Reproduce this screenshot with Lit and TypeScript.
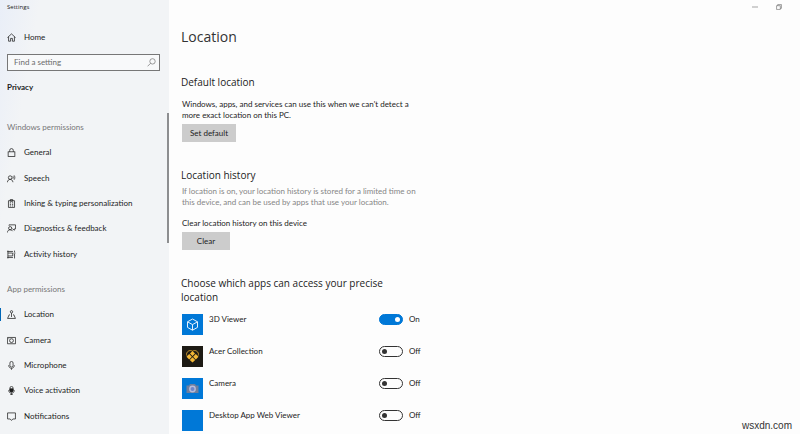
import { LitElement, html, css, svg, type TemplateResult, type SVGTemplateResult } from "lit";
import { customElement, property, state } from "lit/decorators.js";
import { classMap } from "lit/directives/class-map.js";

const glyphs: Record<string, SVGTemplateResult> = {
  home: svg`<path d="M.8 8.200 8 1.600l7.200 6.600M2.800 6.800V14.600h3.600V9.600h3.200v5h3.600V6.800" />`,
  general: svg`<rect x="2" y="6.8" width="12" height="8.2" /><path d="M4.800 6.800V4.200a3.200 3.200 0 0 1 6.400 0v2.600" />`,
  speech: svg`<circle cx="5.6" cy="6.4" r="3.2" /><path d="M.6 14.800C1 11.400 3 9.600 5.600 9.600s4.600 1.800 5 5M10.400 3.800c1 1.500 1 3.200 0 4.800M12.600 2.400c1.700 2.400 1.700 5.400 0 7.800" />`,
  inking: svg`<path d="M2.600 3h10.800v12H2.600zM5.800 1h4.400v3H5.800z" /><path d="M5 6.800h2.200M8.800 6.800H11M5 9.600h2.200M8.800 9.600H11M5 12.400h2.200M8.800 12.400H11" />`,
  diagnostics: svg`<circle cx="5.6" cy="7.4" r="2.8" /><path d="M.6 15.200c.4-3.200 2-5 5-5 2.200 0 3.600 1 4.400 2.600M3.600 3V1.500h11.600v7.200H13v2.500l-2.500-2.500h-1" />`,
  activity: svg`<path d="M.6 2.600h10M.6 13.400h10M1.600 1v14M1.600 5.400h8.600v5.200H1.600M13.400 1v3M13.400 7v8M11.800 5.500h3.200" />`,
  location: svg`<path d="M5.200 8.600H3.800L1 15h14l-2.800-6.400h-1.400M8 12.400V5.400" /><circle cx="8" cy="3.2" r="2.1" />`,
  camera: svg`<path d="M.8 2.600h14.400v11.200H.8z" /><circle cx="8" cy="8.2" r="3.4" /><path d="M2.600 4.800h1.400" />`,
  microphone: svg`<rect x="5.200" y=".8" width="5.600" height="10" rx="2.800" /><path d="M3 7.400c0 7.400 10 7.400 10 0M8 13v2.600" />`,
  voice: svg`<rect x="5.2" y=".8" width="5.6" height="10" rx="2.8" /><path class="solid" d="M5.2 5h5.6v3a2.800 2.800 0 0 1-5.600 0z" /><path d="M3 7.400c0 7.400 10 7.400 10 0M8 13v2.600M5.600 15.400h4.800" />`,
  notifications: svg`<path d="M1 1.600h14v10.800h-4.600L8 15l-2.400-2.600H1z" />`,
  search: svg`<circle cx="9.8" cy="6" r="4.8" /><path d="M6.400 9.400 1 14.800" />`,
  minimise: svg`<path d="M0 8h16" />`,
  restore: svg`<path d="M1.500 4.500h10v10h-10zM4.500 4.500v-3h10v10h-3" />`,
};

const tiles: Record<string, SVGTemplateResult | string> = {
  viewer: svg`<path class="line" d="M10.5 5l5 2.8v5.600l-5 2.800-5-2.800V7.800zM5.500 7.800l5 2.800 5-2.800M10.500 10.600v5.600" />`,
  acer: svg`<path class="rim" d="M4.800 9.600C3.400 6 7.800 3.200 10.500 5.200 13.200 3.200 17.600 6 16.200 9.600" />
    <path class="gold" d="M10.500 5l2.500 2.500-2.500 2.500L8 7.500zM7.200 8l2.700 2.700-2.700 2.700-2.700-2.700zM13.800 8l2.700 2.700-2.700 2.700-2.700-2.700zM10.500 11.200l2.700 2.700-2.700 2.700-2.700-2.700z" />`,
  camera: svg`<path class="body" d="M4.500 7.500H7l1-1.500h5l1 1.500h2.500v7.500h-12z" /><circle class="ring" cx="10.5" cy="11" r="3.4" /><circle class="lens" cx="10.5" cy="11" r="2" />`,
  blank: "",
};

@customElement("line-icon")
export class LineIcon extends LitElement {
  @property() name = "";

  static styles = css`
    :host { display: block; width: 9px; height: 9px; flex: none; }
    .glyph { display: block; width: 100%; height: 100%; fill: none; stroke: currentColor; stroke-width: 1.3; }
    .solid { fill: currentColor; }
  `;

  render() {
    return html`<svg class="glyph" viewBox="0 0 16 16" aria-hidden="true">${glyphs[this.name]}</svg>`;
  }
}

interface NavItem { icon: string; label: string; }
interface AppEntry { tile: string; name: string; allowed: boolean; }

const windowsPermissions: NavItem[] = [
  { icon: "general", label: "General" },
  { icon: "speech", label: "Speech" },
  { icon: "inking", label: "Inking & typing personalization" },
  { icon: "diagnostics", label: "Diagnostics & feedback" },
  { icon: "activity", label: "Activity history" },
];

const appPermissions: NavItem[] = [
  { icon: "location", label: "Location" },
  { icon: "camera", label: "Camera" },
  { icon: "microphone", label: "Microphone" },
  { icon: "voice", label: "Voice activation" },
  { icon: "notifications", label: "Notifications" },
];

@customElement("app-root")
export class AppRoot extends LitElement {
  @state() private current = "Location";
  @state() private apps: AppEntry[] = [
    { tile: "viewer", name: "3D Viewer", allowed: true },
    { tile: "acer", name: "Acer Collection", allowed: false },
    { tile: "camera", name: "Camera", allowed: false },
    { tile: "blank", name: "Desktop App Web Viewer", allowed: false },
  ];

  static styles = css`
    * { box-sizing: border-box; }
    :host {
      display: grid;
      grid-template-columns: 169px 1fr;
      position: relative;
      height: 100vh;
      overflow: hidden;
      font: 8px/11px Lato, "Open Sans", sans-serif;
      color: #1c1c1c;
      background: #fdfdfd;
    }
    h1, h2, h3, p, ul { margin: 0; padding: 0; }
    ul { list-style: none; }
    button, input { font: inherit; color: inherit; border: 0; border-radius: 0; margin: 0; }

    .side {
      display: flex;
      overflow: hidden;
      background: linear-gradient(100deg, #e9eef8 0, #f2f4f6 40px, #f2f4f6 100%);
    }
    .menu { flex: 1; min-width: 0; }
    .app-name { padding: 2px 7px 0; font: 6px/10px "Open Sans", sans-serif; }
    .link {
      display: flex;
      align-items: center;
      gap: 8px;
      padding: 0 7px;
      color: inherit;
      text-decoration: none;
      white-space: nowrap;
    }
    .home { margin-top: 17px; height: 16px; }
    .search {
      display: flex;
      align-items: center;
      margin: 9px 7px 0;
      height: 17px;
      padding: 0 3px 0 6px;
      border: 1px solid #777;
      background: #f8f9fa;
      color: #777;
    }
    .query { flex: 1; min-width: 0; padding: 0; background: none; outline: none; }
    .query::placeholder { color: #6c6c6c; opacity: 1; }
    .section { padding: 10px 7px 0; line-height: 12px; font-weight: 700; }
    .group { padding: 0 7px; line-height: 12px; font-weight: 400; font-size: 8px; color: #777; }
    .group.first { margin-top: 28px; }
    .group.next { margin-top: 16px; }
    .items { display: grid; grid-auto-rows: 1fr; min-height: 127px; margin-top: 7px; }
    .items .link { height: 100%; }
    .link.current { position: relative; }
    .link.current::before {
      content: "";
      position: absolute;
      left: 0;
      top: 6px;
      bottom: 6px;
      width: 1px;
      background: #0067b8;
    }
    .thumb { flex: none; width: 2px; height: 130px; margin-top: 113px; background: #8d8e90; }

    .page { display: flex; flex-direction: column; overflow: hidden; }
    .caption { display: flex; justify-content: flex-end; gap: 18px; padding: 4px 18px 0 0; }
    .caption button { padding: 0; background: none; color: #444; }
    .caption line-icon { width: 6px; height: 6px; }
    .content { width: 100%; max-width: 263px; padding: 17px 12px 0; }
    h1 { font: 14px/20px "Open Sans", sans-serif; color: #333; }
    h2 { font: 10px/14px "Open Sans", sans-serif; }
    .block { margin-top: 28px; }
    .block.next { margin-top: 26px; }
    .block p { padding-left: 1px; }
    .lead { margin-top: 10px; }
    .note { margin-top: 4px; color: #858585; }
    .label { margin-top: 10px; }
    .action { display: block; min-width: 48px; height: 18px; margin: 3px 0 0 1px; padding: 0 8px; background: #ccc; }

    .apps { display: grid; gap: 11px; margin: 10px 0 0 1px; }
    .app { display: grid; grid-template-columns: 21px 1fr 24px 11px; column-gap: 6px; }
    .tile { display: block; width: 21px; height: 21px; background: #0078d7; }
    .tile.acer { background: #1d1a14; }
    .line { fill: none; stroke: #e4f1fc; stroke-width: 1; }
    .gold { fill: #f3b736; }
    .rim { fill: none; stroke: #c9952b; stroke-width: 1; }
    .body { fill: #6f7f9e; }
    .ring { fill: #b9bdda; }
    .lens { fill: #6d86c9; }
    .switch {
      appearance: none;
      display: flex;
      align-items: center;
      width: 24px;
      height: 11px;
      padding: 0 2px;
      border: 1px solid #333;
      border-radius: 6px;
    }
    .switch::before { content: ""; width: 5px; height: 5px; border-radius: 50%; background: #333; }
    .switch:checked { justify-content: flex-end; background: #0078d7; border-color: #0078d7; }
    .switch:checked::before { background: #fff; }

    .site {
      position: absolute;
      right: 8px;
      bottom: 2px;
      font: 10px/12px "Liberation Sans", sans-serif;
      color: #333;
    }
  `;

  private renderItems(items: NavItem[]): TemplateResult {
    return html`<ul class="items">
      ${items.map((item) => html`<li>
        <a class=${classMap({ link: true, current: item.label === this.current })} href="#"
          @click=${(e: Event) => { e.preventDefault(); this.current = item.label; }}>
          <line-icon name=${item.icon}></line-icon><span>${item.label}</span>
        </a>
      </li>`)}
    </ul>`;
  }

  private toggle(index: number) {
    this.apps = this.apps.map((app, i) => (i === index ? { ...app, allowed: !app.allowed } : app));
  }

  private renderApp(app: AppEntry, index: number): TemplateResult {
    const id = `app-${index}`;
    return html`<li class="app">
      <svg class="tile ${app.tile}" viewBox="0 0 21 21" aria-hidden="true">${tiles[app.tile]}</svg>
      <label for=${id}>${app.name}</label>
      <input class="switch" type="checkbox" role="switch" id=${id} .checked=${app.allowed} @change=${() => this.toggle(index)} />
      <span>${app.allowed ? "On" : "Off"}</span>
    </li>`;
  }

  render() {
    return html`
      <aside class="side">
        <nav class="menu">
          <div class="app-name">Settings</div>
          <a class="link home" href="#"><line-icon name="home"></line-icon><span>Home</span></a>
          <div class="search">
            <input class="query" type="text" aria-label="Find a setting" placeholder="Find a setting" />
            <line-icon name="search"></line-icon>
          </div>
          <div class="section">Privacy</div>
          <h3 class="group first">Windows permissions</h3>
          ${this.renderItems(windowsPermissions)}
          <h3 class="group next">App permissions</h3>
          ${this.renderItems(appPermissions)}
        </nav>
        <div class="thumb"></div>
      </aside>
      <main class="page">
        <div class="caption">
          <button aria-label="Minimise"><line-icon name="minimise"></line-icon></button>
          <button aria-label="Restore"><line-icon name="restore"></line-icon></button>
        </div>
        <div class="content">
          <h1>Location</h1>
          <section class="block">
            <h2>Default location</h2>
            <p class="lead">Windows, apps, and services can use this when we can't detect a more exact location on this PC.</p>
            <button class="action">Set default</button>
          </section>
          <section class="block next">
            <h2>Location history</h2>
            <p class="note">If location is on, your location history is stored for a limited time on this device, and can be used by apps that use your location.</p>
            <p class="label">Clear location history on this device</p>
            <button class="action">Clear</button>
          </section>
          <section class="block next">
            <h2>Choose which apps can access your precise location</h2>
            <ul class="apps">${this.apps.map((app, i) => this.renderApp(app, i))}</ul>
          </section>
        </div>
      </main>
      <div class="site">wsxdn.com</div>
    `;
  }
}
